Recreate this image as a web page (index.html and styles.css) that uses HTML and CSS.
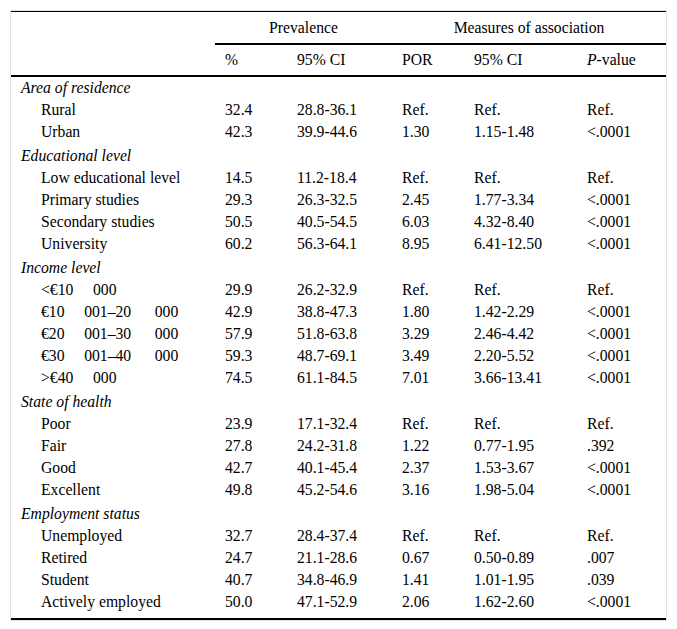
FILE: index.html
```html
<!DOCTYPE html>
<html>
<head>
<meta charset="utf-8">
<link rel="stylesheet" href="styles.css">
</head>
<body>
<div class="wrap">
<table class="tbl">
<colgroup>
<col class="c0"><col class="c1"><col class="c2"><col class="c3"><col class="c4"><col class="c5">
</colgroup>
<thead>
<tr class="h1"><th></th><th colspan="2" class="span">Prevalence</th><th colspan="3" class="span">Measures of association</th></tr>
<tr class="h2"><th></th><th>%</th><th>95% CI</th><th>POR</th><th>95% CI</th><th><i>P</i>-value</th></tr>
</thead>
<tbody>
<tr class="grp first"><td colspan="6">Area of residence</td></tr>
<tr><td class="item">Rural</td><td>32.4</td><td>28.8-36.1</td><td>Ref.</td><td>Ref.</td><td>Ref.</td></tr>
<tr><td class="item">Urban</td><td>42.3</td><td>39.9-44.6</td><td>1.30</td><td>1.15-1.48</td><td>&lt;.0001</td></tr>
<tr class="grp"><td colspan="6">Educational level</td></tr>
<tr><td class="item">Low educational level</td><td>14.5</td><td>11.2-18.4</td><td>Ref.</td><td>Ref.</td><td>Ref.</td></tr>
<tr><td class="item">Primary studies</td><td>29.3</td><td>26.3-32.5</td><td>2.45</td><td>1.77-3.34</td><td>&lt;.0001</td></tr>
<tr><td class="item">Secondary studies</td><td>50.5</td><td>40.5-54.5</td><td>6.03</td><td>4.32-8.40</td><td>&lt;.0001</td></tr>
<tr><td class="item">University</td><td>60.2</td><td>56.3-64.1</td><td>8.95</td><td>6.41-12.50</td><td>&lt;.0001</td></tr>
<tr class="grp"><td colspan="6">Income level</td></tr>
<tr><td class="item">&lt;€10 &emsp;000</td><td>29.9</td><td>26.2-32.9</td><td>Ref.</td><td>Ref.</td><td>Ref.</td></tr>
<tr><td class="item">€10 &emsp;001–20&ensp;&emsp;000</td><td>42.9</td><td>38.8-47.3</td><td>1.80</td><td>1.42-2.29</td><td>&lt;.0001</td></tr>
<tr><td class="item">€20 &emsp;001–30&ensp;&emsp;000</td><td>57.9</td><td>51.8-63.8</td><td>3.29</td><td>2.46-4.42</td><td>&lt;.0001</td></tr>
<tr><td class="item">€30 &emsp;001–40&ensp;&emsp;000</td><td>59.3</td><td>48.7-69.1</td><td>3.49</td><td>2.20-5.52</td><td>&lt;.0001</td></tr>
<tr><td class="item">&gt;€40 &emsp;000</td><td>74.5</td><td>61.1-84.5</td><td>7.01</td><td>3.66-13.41</td><td>&lt;.0001</td></tr>
<tr class="grp"><td colspan="6">State of health</td></tr>
<tr><td class="item">Poor</td><td>23.9</td><td>17.1-32.4</td><td>Ref.</td><td>Ref.</td><td>Ref.</td></tr>
<tr><td class="item">Fair</td><td>27.8</td><td>24.2-31.8</td><td>1.22</td><td>0.77-1.95</td><td>.392</td></tr>
<tr><td class="item">Good</td><td>42.7</td><td>40.1-45.4</td><td>2.37</td><td>1.53-3.67</td><td>&lt;.0001</td></tr>
<tr><td class="item">Excellent</td><td>49.8</td><td>45.2-54.6</td><td>3.16</td><td>1.98-5.04</td><td>&lt;.0001</td></tr>
<tr class="grp"><td colspan="6">Employment status</td></tr>
<tr><td class="item">Unemployed</td><td>32.7</td><td>28.4-37.4</td><td>Ref.</td><td>Ref.</td><td>Ref.</td></tr>
<tr><td class="item">Retired</td><td>24.7</td><td>21.1-28.6</td><td>0.67</td><td>0.50-0.89</td><td>.007</td></tr>
<tr><td class="item">Student</td><td>40.7</td><td>34.8-46.9</td><td>1.41</td><td>1.01-1.95</td><td>.039</td></tr>
<tr class="last"><td class="item">Actively employed</td><td>50.0</td><td>47.1-52.9</td><td>2.06</td><td>1.62-2.60</td><td>&lt;.0001</td></tr>
</tbody>
</table>
</div>
</body>
</html>
```
FILE: styles.css
```css
html, body {
  margin: 0;
  padding: 0;
  background: #fff;
}
body {
  padding: 10px;
  font-family: "Liberation Serif", "Times New Roman", serif;
  font-size: 15.7px;
  color: #000;
}
.wrap {
  width: 655px;
  border: 1px solid #e3e3e3;
}
.tbl {
  width: 655px;
  border-collapse: collapse;
  table-layout: fixed;
  border-top: 1px solid #000;
  border-bottom: 2px solid #000;
}
.c0 { width: 204px; }
.c1 { width: 72px; }
.c2 { width: 105px; }
.c3 { width: 72px; }
.c4 { width: 113px; }
.c5 { width: 89px; }
.tbl th, .tbl td {
  padding: 3px 0 3px 10px;
  line-height: 16px;
  text-align: left;
  font-weight: normal;
  white-space: nowrap;
  vertical-align: middle;
}
.tbl thead th {
  padding-top: 7px;
  padding-bottom: 7px;
  text-align: left;
}
.tbl .h1 th {
  padding-top: 8px;
}
.tbl .h1 th.span {
  text-align: center;
  padding-left: 0;
  padding-right: 0;
  border-bottom: 2px solid #000;
}
.tbl .h2 th {
  border-bottom: 2px solid #000;
}
.tbl .grp td {
  font-style: italic;
  padding-top: 5px;
}
.tbl .grp.first td {
  padding-top: 3px;
}
.tbl td.item {
  padding-left: 30px;
}
.tbl .last td {
  padding-bottom: 8px;
}
```
